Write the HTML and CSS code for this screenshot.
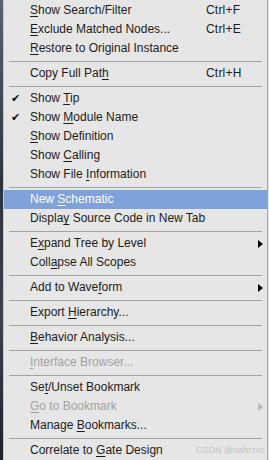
FILE: index.html
```html
<!DOCTYPE html>
<html>
<head>
<meta charset="utf-8">
<link rel="stylesheet" href="styles.css">
</head>
<body>
<div class="screen">
  <div class="backdrop"></div>
  <div class="menu">
    <div class="item"><span class="check"></span><span class="label"><u>S</u>how Search/Filter</span><span class="key">Ctrl+F</span></div>
    <div class="item"><span class="check"></span><span class="label"><u>E</u>xclude Matched Nodes...</span><span class="key">Ctrl+E</span></div>
    <div class="item"><span class="check"></span><span class="label"><u>R</u>estore to Original Instance</span><span class="key"></span></div>
    <div class="sep"></div>
    <div class="item"><span class="check"></span><span class="label">Copy Full Pat<u>h</u></span><span class="key">Ctrl+H</span></div>
    <div class="sep"></div>
    <div class="item"><span class="check">✔</span><span class="label">Show <u>T</u>ip</span><span class="key"></span></div>
    <div class="item"><span class="check">✔</span><span class="label">Show <u>M</u>odule Name</span><span class="key"></span></div>
    <div class="item"><span class="check"></span><span class="label"><u>S</u>how Definition</span><span class="key"></span></div>
    <div class="item"><span class="check"></span><span class="label">Show <u>C</u>alling</span><span class="key"></span></div>
    <div class="item"><span class="check"></span><span class="label">Show File <u>I</u>nformation</span><span class="key"></span></div>
    <div class="sep"></div>
    <div class="item active"><span class="check"></span><span class="label">New <u>S</u>chematic</span><span class="key"></span></div>
    <div class="item"><span class="check"></span><span class="label">Displa<u>y</u> Source Code in New Tab</span><span class="key"></span></div>
    <div class="sep"></div>
    <div class="item"><span class="check"></span><span class="label">E<u>x</u>pand Tree by Level</span><span class="key"><span class="arrow"></span></span></div>
    <div class="item"><span class="check"></span><span class="label">Coll<u>a</u>pse All Scopes</span><span class="key"></span></div>
    <div class="sep"></div>
    <div class="item"><span class="check"></span><span class="label">Add to Wave<u>f</u>orm</span><span class="key"><span class="arrow"></span></span></div>
    <div class="sep"></div>
    <div class="item"><span class="check"></span><span class="label">Export <u>H</u>ierarchy...</span><span class="key"></span></div>
    <div class="sep"></div>
    <div class="item"><span class="check"></span><span class="label"><u>B</u>ehavior Analysis...</span><span class="key"></span></div>
    <div class="sep"></div>
    <div class="item disabled"><span class="check"></span><span class="label"><u>I</u>nterface Browser...</span><span class="key"></span></div>
    <div class="sep"></div>
    <div class="item"><span class="check"></span><span class="label">Se<u>t</u>/Unset Bookmark</span><span class="key"></span></div>
    <div class="item disabled"><span class="check"></span><span class="label"><u>G</u>o to Bookmark</span><span class="key"><span class="arrow"></span></span></div>
    <div class="item"><span class="check"></span><span class="label">Manage <u>B</u>ookmarks...</span><span class="key"></span></div>
    <div class="sep"></div>
    <div class="item"><span class="check"></span><span class="label">Correlate to <u>G</u>ate Design</span><span class="key"></span></div>
  </div>
  <div class="mark">CSDN @oahrzvc</div>
</div>
</body>
</html>
```
FILE: styles.css
```css
html, body {
  margin: 0;
  padding: 0;
  background: #e4e4e4;
}
.screen {
  position: relative;
  display: flex;
  width: 269px;
  height: 460px;
  overflow: hidden;
  font-family: "Liberation Sans", Arial, sans-serif;
  font-size: 12px;
  color: #1c1c1c;
}
.backdrop {
  width: 3px;
  flex: none;
  background: linear-gradient(#5a6270, #2e333b 40%, #3c414a 70%, #1e2126);
}
.menu {
  width: 263px;
  flex: none;
  background: #e6e6e6;
  border-left: 1px solid #c8c8c8;
  border-right: 1px solid #a8a8a8;
  display: flex;
  flex-direction: column;
  padding-top: 1px;
}
.item {
  height: 19px;
  line-height: 19px;
  display: flex;
  align-items: center;
  white-space: nowrap;
}
.check {
  width: 26px;
  flex: none;
  padding-left: 7px;
  box-sizing: border-box;
  font-family: "DejaVu Sans", sans-serif;
  font-size: 11px;
  color: #111;
}
.label {
  flex: 1;
}
.key {
  width: 61px;
  flex: none;
  display: flex;
  align-items: center;
  letter-spacing: 0.2px;
}
.arrow {
  margin-left: 52px;
  width: 0;
  height: 0;
  border-top: 4px solid transparent;
  border-bottom: 4px solid transparent;
  border-left: 5px solid #000;
}
.disabled {
  color: #a2a2a2;
}
.disabled .arrow {
  border-left-color: #b8b8b8;
}
.active {
  background: #7fa2db;
  color: #ffffff;
}
.sep {
  height: 6px;
  display: flex;
  align-items: center;
  padding: 0 5px 0 5px;
}
.sep::before {
  content: "";
  flex: 1;
  height: 1px;
  background: #a3a3a3;
}
.mark {
  position: absolute;
  left: 196px;
  top: 444px;
  font-family: "Liberation Sans", sans-serif;
  font-size: 9px;
  line-height: 12px;
  color: #c4c4c4;
  white-space: nowrap;
}
u {
  text-decoration-thickness: 1px;
  text-underline-offset: 2px;
}
```
